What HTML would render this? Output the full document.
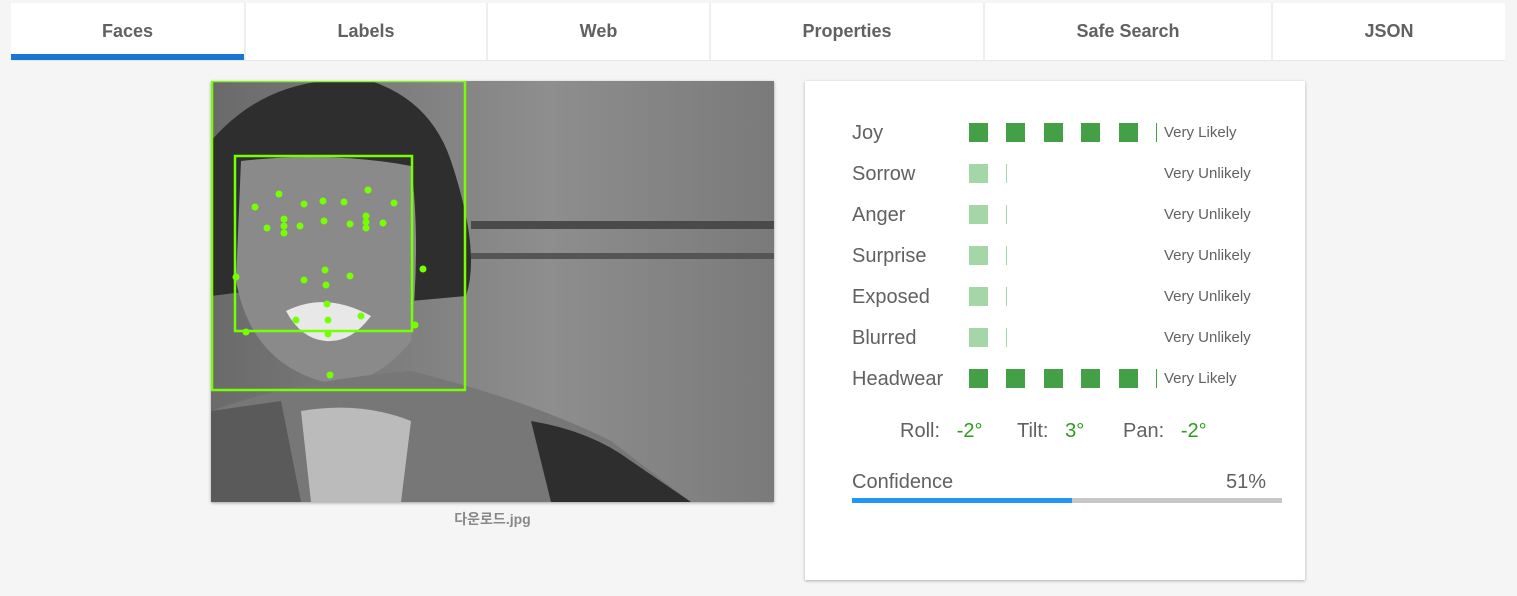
<!DOCTYPE html>
<html><head><meta charset="utf-8"><style>
body{margin:0;width:1517px;height:596px;background:#f5f5f5;font-family:"Liberation Sans","Noto Sans CJK KR",sans-serif;position:relative;overflow:hidden}
.tabs{position:absolute;left:11px;top:3px;width:1494px;height:57px;background:#fff;border-bottom:1px solid #e6e6e6}
.tab{position:absolute;top:0;height:57px;line-height:57px;text-align:center;font-size:18px;font-weight:bold;color:#616161;border-right:2px solid #eee;box-sizing:border-box}
.card{position:absolute;left:805px;top:81px;width:500px;height:499px;background:#fff;box-shadow:0 1px 3px rgba(0,0,0,.3)}
.row{position:absolute;left:0;height:20px;width:500px}
.lbl{position:absolute;left:47px;top:-1px;font-size:20px;color:#616161}
.sq{position:absolute;top:0;width:19px;height:19px;background:#43a047}
.sq.l{background:#a5d6a7}
.ln{position:absolute;top:0;width:1px;height:19px;background:#43a047}
.ln.l{background:#a5d6a7}
.val{position:absolute;left:359px;top:1px;font-size:15px;color:#616161}
.ang{position:absolute;top:339px;font-size:20px;color:#616161}
.g{color:#2e9b1e}
</style></head><body>
<div class="tabs">
<div class="tab" style="left:0;width:235px">Faces</div>
<div class="tab" style="left:235px;width:242px">Labels</div>
<div class="tab" style="left:477px;width:223px">Web</div>
<div class="tab" style="left:700px;width:274px">Properties</div>
<div class="tab" style="left:974px;width:288px">Safe Search</div>
<div class="tab" style="left:1262px;width:232px;border:0">JSON</div>
<div style="position:absolute;left:0;top:51px;width:233px;height:6px;background:#1976d2"></div>
</div>
<svg style="position:absolute;left:211px;top:81px;box-shadow:0 1px 3px rgba(0,0,0,.35)" width="563" height="421" viewBox="0 0 563 421">
<defs><linearGradient id="bg" x1="0" x2="1"><stop offset="0" stop-color="#6a6a6a"/><stop offset=".6" stop-color="#8e8e8e"/><stop offset="1" stop-color="#7a7a7a"/></linearGradient></defs>
<rect width="563" height="421" fill="url(#bg)"/>
<rect x="260" y="140" width="303" height="8" fill="#4a4a4a"/>
<rect x="260" y="172" width="303" height="6" fill="#555"/>
<path d="M0 60 Q60 -10 160 0 Q220 20 240 80 Q270 170 255 215 L200 220 L40 210 L0 215Z" fill="#2e2e2e"/>
<path d="M30 80 Q120 70 200 85 Q210 160 200 260 Q160 310 110 300 Q40 280 25 200Z" fill="#8a8a8a"/>
<path d="M75 230 Q115 210 160 235 Q140 262 115 260 Q90 258 75 230Z" fill="#e8e8e8"/>
<path d="M0 330 Q80 300 200 290 Q320 320 400 360 L480 421 L0 421Z" fill="#777"/>
<path d="M0 330 L70 320 L90 421 L0 421Z" fill="#5a5a5a"/>
<path d="M320 340 Q380 350 420 380 L480 421 L340 421Z" fill="#2e2e2e"/>
<path d="M90 330 Q150 320 200 340 L190 421 L100 421Z" fill="#bbb"/>
<g fill="none" stroke="#76ff03" stroke-width="2.5">
<rect x="1" y="0" width="253" height="309"/>
<rect x="24" y="75" width="177" height="175"/>
</g>
<g fill="#76ff03">
<circle cx="44" cy="126" r="3.5"/><circle cx="68" cy="113" r="3.5"/><circle cx="93" cy="123" r="3.5"/><circle cx="112" cy="120" r="3.5"/><circle cx="133" cy="121" r="3.5"/><circle cx="157" cy="109" r="3.5"/><circle cx="183" cy="122" r="3.5"/>
<circle cx="56" cy="147" r="3.5"/><circle cx="73" cy="138" r="3.5"/><circle cx="73" cy="145" r="3.5"/><circle cx="73" cy="152" r="3.5"/><circle cx="89" cy="145" r="3.5"/><circle cx="113" cy="140" r="3.5"/><circle cx="139" cy="143" r="3.5"/><circle cx="155" cy="135" r="3.5"/><circle cx="155" cy="141" r="3.5"/><circle cx="155" cy="147" r="3.5"/><circle cx="172" cy="142" r="3.5"/>
<circle cx="114" cy="189" r="3.5"/><circle cx="93" cy="199" r="3.5"/><circle cx="139" cy="195" r="3.5"/><circle cx="115" cy="204" r="3.5"/><circle cx="212" cy="188" r="3.5"/><circle cx="25" cy="196" r="3.5"/>
<circle cx="116" cy="223" r="3.5"/><circle cx="85" cy="239" r="3.5"/><circle cx="117" cy="239" r="3.5"/><circle cx="150" cy="235" r="3.5"/><circle cx="117" cy="253" r="3.5"/><circle cx="35" cy="251" r="3.5"/><circle cx="204" cy="244" r="3.5"/><circle cx="119" cy="294" r="3.5"/>
</g>
</svg>
<div style="position:absolute;left:211px;top:509px;width:563px;text-align:center;font-size:14px;font-weight:bold;color:#888">다운로드.jpg</div>
<div class="card">
<div class="row" style="top:42px"><span class="lbl">Joy</span><i class="sq" style="left:164px"></i><i class="sq" style="left:201px"></i><i class="sq" style="left:239px"></i><i class="sq" style="left:276px"></i><i class="sq" style="left:314px"></i><i class="ln" style="left:351px"></i><span class="val">Very Likely</span></div>
<div class="row" style="top:83px"><span class="lbl">Sorrow</span><i class="sq l" style="left:164px"></i><i class="ln l" style="left:201px"></i><span class="val">Very Unlikely</span></div>
<div class="row" style="top:124px"><span class="lbl">Anger</span><i class="sq l" style="left:164px"></i><i class="ln l" style="left:201px"></i><span class="val">Very Unlikely</span></div>
<div class="row" style="top:165px"><span class="lbl">Surprise</span><i class="sq l" style="left:164px"></i><i class="ln l" style="left:201px"></i><span class="val">Very Unlikely</span></div>
<div class="row" style="top:206px"><span class="lbl">Exposed</span><i class="sq l" style="left:164px"></i><i class="ln l" style="left:201px"></i><span class="val">Very Unlikely</span></div>
<div class="row" style="top:247px"><span class="lbl">Blurred</span><i class="sq l" style="left:164px"></i><i class="ln l" style="left:201px"></i><span class="val">Very Unlikely</span></div>
<div class="row" style="top:288px"><span class="lbl">Headwear</span><i class="sq" style="left:164px"></i><i class="sq" style="left:201px"></i><i class="sq" style="left:239px"></i><i class="sq" style="left:276px"></i><i class="sq" style="left:314px"></i><i class="ln" style="left:351px"></i><span class="val">Very Likely</span></div>
<div class="ang" style="left:95px">Roll:&nbsp;&nbsp; <span class="g">-2°</span></div>
<div class="ang" style="left:212px">Tilt:&nbsp;&nbsp; <span class="g">3°</span></div>
<div class="ang" style="left:318px">Pan:&nbsp;&nbsp; <span class="g">-2°</span></div>
<div style="position:absolute;left:47px;top:390px;font-size:20px;color:#616161">Confidence</div>
<div style="position:absolute;right:39px;top:390px;font-size:20px;color:#616161">51%</div>
<div style="position:absolute;left:47px;top:417px;width:430px;height:5px;background:#c8c8c8"><div style="width:220px;height:5px;background:#2196f3"></div></div>
</div>
</body></html>
